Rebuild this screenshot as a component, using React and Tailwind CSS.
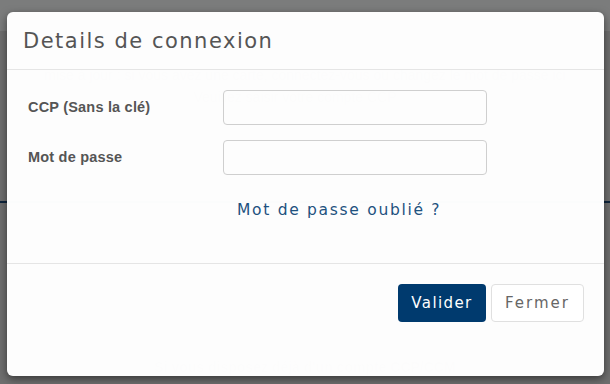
import React from 'react';

const wide = { fontFamily: '"DejaVu Sans", Verdana, sans-serif' };

function Field({ label }) {
    return (
        <div className="flex items-center">
            <label className="w-[195px] text-[14.5px] font-bold text-[#555] tracking-[0.2px]" style={{ fontFamily: '"Liberation Sans", Arial, sans-serif' }}>
                {label}
            </label>
            <input className="w-[264px] h-[35px] rounded-[4px] border border-[#cfcfcf] bg-transparent px-3 outline-none" />
        </div>
    );
}

export default function App() {
    return (
        <div className="relative w-[610px] h-[384px] overflow-hidden bg-[#dedede]" style={{ fontFamily: '"Liberation Sans", Arial, sans-serif' }}>
            {/* Page behind the overlay */}
            <div className="h-[31px] bg-[#f6f8f8]" />
            <div className="mt-[34px] whitespace-nowrap text-center text-[14px] text-[#888]">
                mise à jour : si vous avez une carte, connectez-vous ou changez le mot de passe ici
            </div>
            <div className="mt-[1px] text-center text-[14px] text-[#999] pr-[20px]">Veuillez saisir votre compte CCP</div>
            <div className="mt-[93px] h-[2px] bg-[#1c4a7a]" />
            <div className="mt-[61px] text-center text-[15px] text-[#bbb]">Vous n'avez pas encore de compte ? Créez-le maintenant</div>
            <div className="mx-auto mt-[22px] w-[255px] h-[40px] bg-[#c9c9c9]" />
            <div className="mt-[8px] text-center text-[14px] font-bold text-[#aaa]">Si vous disposez déjà d'un compte CCP/CCM</div>

            {/* Overlay */}
            <div className="absolute inset-0 bg-black/50" />

            {/* Modal */}
            <div className="absolute left-[7px] top-[12px] w-[597px] h-[364px] flex flex-col rounded-[6px] bg-white/[0.985] shadow-[0_3px_9px_rgba(0,0,0,0.5)]">
                <div className="h-[58px] shrink-0 flex items-center px-[16px] border-b border-[#e5e5e5]">
                    <h4 className="text-[21px] text-[#555] pt-[2px] tracking-[1.5px]" style={wide}>Details de connexion</h4>
                </div>

                <div className="h-[193px] shrink-0 flex flex-col gap-[15px] pl-[21px] pt-[20px]">
                    <Field label="CCP (Sans la clé)" />
                    <Field label="Mot de passe" />
                    <a className="ml-[209px] mt-[9px] text-[15.5px] text-[#1e527f] tracking-[1.7px]" style={wide}>
                        Mot de passe oublié ?
                    </a>
                </div>

                <div className="flex-1 flex justify-end items-start gap-[5px] pt-[20px] pr-[20px] border-t border-[#e5e5e5]">
                    <button className="w-[88px] h-[38px] rounded-[4px] bg-[#003a6e] text-white text-[15px] tracking-[1.4px]" style={wide}>
                        Valider
                    </button>
                    <button className="w-[93px] h-[38px] rounded-[4px] border border-[#e0e0e0] bg-white text-[#666] text-[15px] tracking-[2px]" style={wide}>
                        Fermer
                    </button>
                </div>
            </div>
        </div>
    );
}
